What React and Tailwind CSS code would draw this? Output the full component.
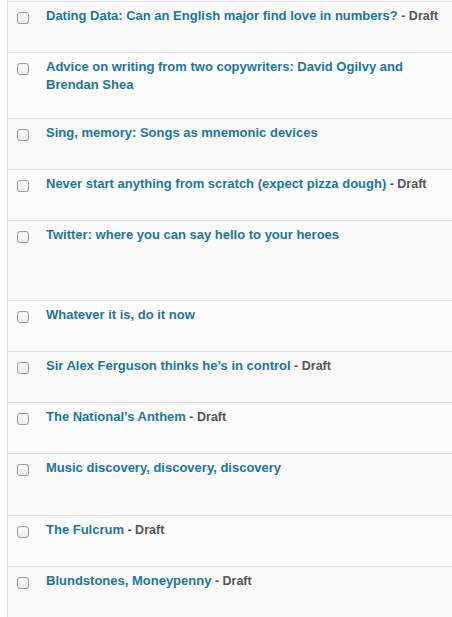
import React from "react";

const rows = [
  { t: "Dating Data: Can an English major find love in numbers?", d: true, h: "h-[51px]" },
  { t: "Advice on writing from two copywriters: David Ogilvy and Brendan Shea", d: false, h: "h-[66px]" },
  { t: "Sing, memory: Songs as mnemonic devices", d: false, h: "h-[51px]" },
  { t: "Never start anything from scratch (expect pizza dough)", d: true, h: "h-[51px]" },
  { t: "Twitter: where you can say hello to your heroes", d: false, h: "h-[80px]" },
  { t: "Whatever it is, do it now", d: false, h: "h-[51px]" },
  { t: "Sir Alex Ferguson thinks he\u2019s in control", d: true, h: "h-[51px]" },
  { t: "The National\u2019s Anthem", d: true, h: "h-[51px]" },
  { t: "Music discovery, discovery, discovery", d: false, h: "h-[62px]" },
  { t: "The Fulcrum", d: true, h: "h-[51px]" },
  { t: "Blundstones, Moneypenny", d: true, h: "h-[51px]" },
];

function Checkbox() {
  return (
    <span className="mt-[10px] ml-[9px] block h-[12px] w-[12px] shrink-0 rounded-[3px] border border-[#9a9a9a] bg-gradient-to-b from-[#ffffff] to-[#e9e9e9] shadow-[inset_0_1px_1px_rgba(0,0,0,0.05)]" />
  );
}

export default function App() {
  return (
    <div className="min-h-[617px] bg-white pt-px pl-[7px] [font-family:'Liberation_Sans',Arial,sans-serif]">
      <div className="border-t border-l border-[#dfdfdf]">
        {rows.map((r, i) => (
          <div
            key={i}
            className={`flex ${r.h} border-b border-[#dfdfdf] ${i % 2 === 0 ? "bg-[#f9f9f9]" : "bg-[#fcfcfc]"}`}
          >
            <Checkbox />
            <div className="ml-[17px] pr-[8px] pt-[5px] text-[13px] leading-[18px] font-bold text-[#21759b]">
              {r.t}
              {r.d && (
                <span className="text-[12.5px] text-[#555555]"> - Draft</span>
              )}
            </div>
          </div>
        ))}
      </div>
    </div>
  );
}
